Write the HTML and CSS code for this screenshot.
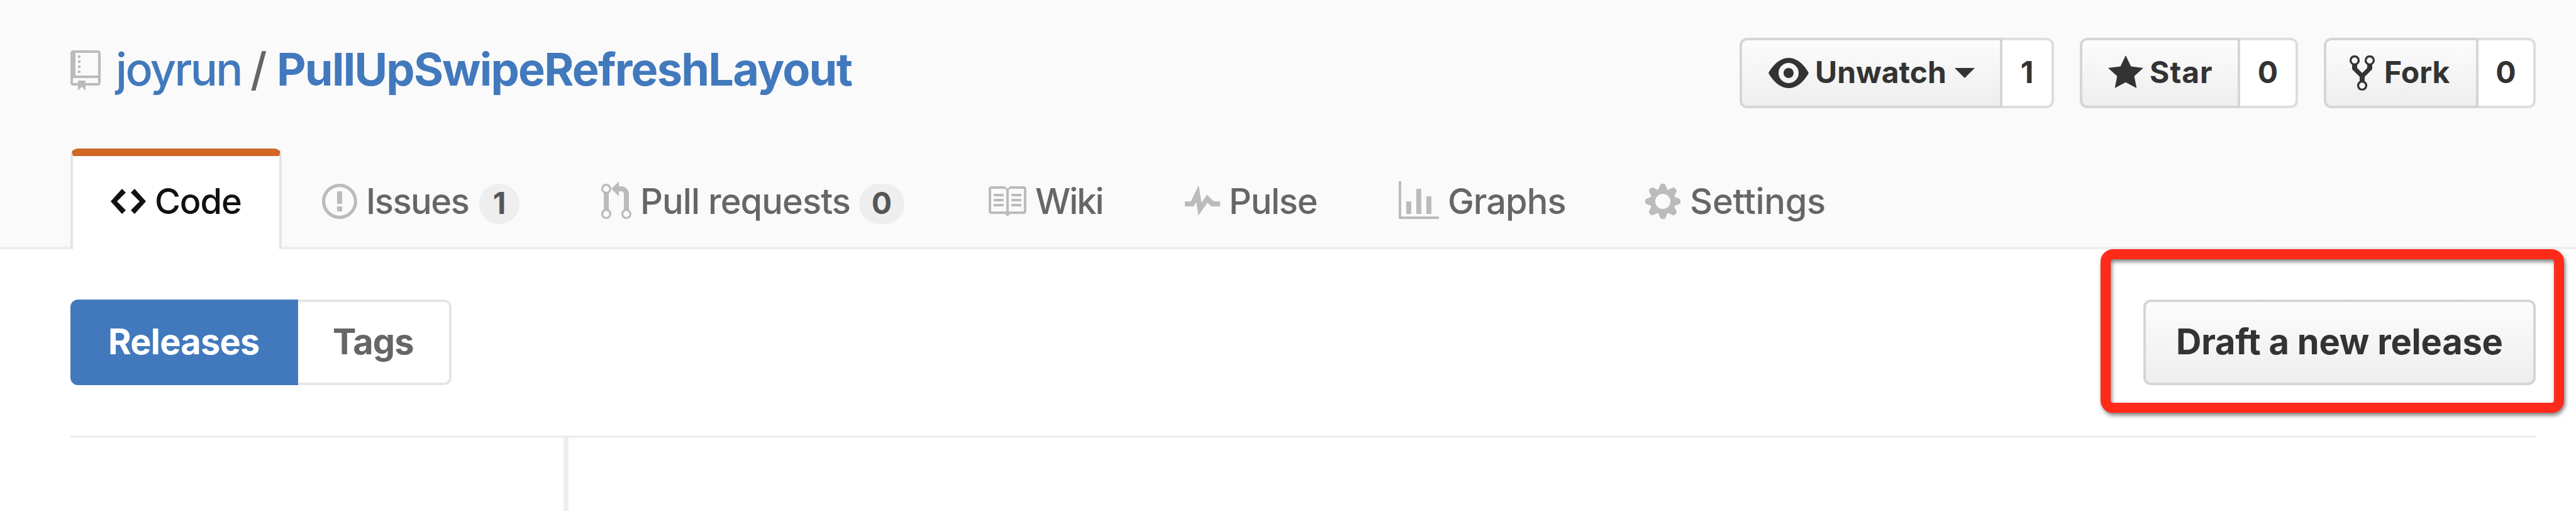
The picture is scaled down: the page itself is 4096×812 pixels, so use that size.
FILE: index.html
```html
<!DOCTYPE html>
<html lang="en">
<head>
<meta charset="utf-8">
<title>joyrun/PullUpSwipeRefreshLayout</title>
<link rel="stylesheet" href="styles.css">
</head>
<body>
<header class="repo-head">
  <div class="title-row">
    <h1 class="title">
      <svg class="icon muted" width="48" height="64" viewBox="0 0 12 16"><path d="M4 9H3V8h1v1zm0-3H3v1h1V6zm0-2H3v1h1V4zm0-2H3v1h1V2zm8-1v12c0 .55-.45 1-1 1H6v2l-1.5-1.5L3 16v-2H1c-.55 0-1-.45-1-1V1c0-.55.45-1 1-1h10c.55 0 1 .45 1 1zm-1 10H1v2h2v-1h3v1h5v-2zm0-10H2v9h9V1z"/></svg>
      <a class="owner">joyrun</a><span class="slash">/</span><a class="repo">PullUpSwipeRefreshLayout</a>
    </h1>
    <div class="actions">
      <div class="action watch">
        <button class="btn btn-sm"><svg class="icon" width="64" height="64" viewBox="0 0 16 16"><path d="M8.06 2C3 2 0 8 0 8s3 6 8.06 6C13 14 16 8 16 8s-3-6-7.94-6zM8 12c-2.2 0-4-1.78-4-4 0-2.2 1.8-4 4-4 2.22 0 4 1.8 4 4 0 2.22-1.78 4-4 4zm2-4c0 1.11-.89 2-2 2-1.11 0-2-.89-2-2 0-1.11.89-2 2-2 1.11 0 2 .89 2 2z"/></svg><span class="label">Unwatch</span><span class="caret"></span></button>
        <a class="count">1</a>
      </div>
      <div class="action star">
        <button class="btn btn-sm"><svg class="icon" width="56" height="64" viewBox="0 0 14 16"><path d="M14 6l-4.9-.64L7 1 4.9 5.36 0 6l3.6 3.26L2.67 14 7 11.67 11.33 14l-.93-4.74L14 6z"/></svg><span class="label">Star</span></button>
        <a class="count">0</a>
      </div>
      <div class="action fork">
        <button class="btn btn-sm"><svg class="icon" width="40" height="64" viewBox="0 0 10 16"><path d="M8 1a1.993 1.993 0 0 0-1 3.72V6L5 8 3 6V4.72A1.993 1.993 0 0 0 2 1a1.993 1.993 0 0 0-1 3.72V6.5l3 3v1.78A1.993 1.993 0 0 0 5 15a1.993 1.993 0 0 0 1-3.72V9.5l3-3V4.72A1.993 1.993 0 0 0 8 1zM2 4.2C1.34 4.2.8 3.65.8 3c0-.65.55-1.2 1.2-1.2.65 0 1.2.55 1.2 1.2 0 .65-.55 1.2-1.2 1.2zm3 10c-.66 0-1.2-.55-1.2-1.2 0-.65.55-1.2 1.2-1.2.65 0 1.2.55 1.2 1.2 0 .65-.55 1.2-1.2 1.2zm3-10c-.66 0-1.2-.55-1.2-1.2 0-.65.55-1.2 1.2-1.2.65 0 1.2.55 1.2 1.2 0 .65-.55 1.2-1.2 1.2z"/></svg><span class="label">Fork</span></button>
        <a class="count">0</a>
      </div>
    </div>
  </div>
  <nav class="tabs">
    <a class="tab tab-code selected"><svg class="icon" width="56" height="64" viewBox="0 0 14 16"><path d="M9.5 3L8 4.5 11.5 8 8 11.5 9.5 13 14 8 9.5 3zm-5 0L0 8l4.5 5L6 11.5 2.5 8 6 4.5 4.5 3z"/></svg><span class="label">Code</span></a>
    <a class="tab tab-issues"><svg class="icon" width="56" height="64" viewBox="0 0 14 16"><path d="M7 2.3c3.14 0 5.7 2.56 5.7 5.7s-2.56 5.7-5.7 5.7A5.71 5.71 0 0 1 1.3 8c0-3.14 2.56-5.7 5.7-5.7zM7 1C3.14 1 0 4.14 0 8s3.14 7 7 7 7-3.14 7-7-3.14-7-7-7zm1 3H6v5h2V4zm0 6H6v2h2v-2z"/></svg><span class="label">Issues</span><span class="counter">1</span></a>
    <a class="tab tab-pulls"><svg class="icon" width="48" height="64" viewBox="0 0 12 16"><path d="M11 11.28V5c-.03-.78-.34-1.47-.94-2.06C9.46 2.35 8.78 2.03 8 2H7V0L4 3l3 3V4h1c.27.02.48.11.69.31.21.2.3.42.31.69v6.28A1.993 1.993 0 0 0 10 15a1.993 1.993 0 0 0 1-3.72zm-1 2.92c-.66 0-1.2-.55-1.2-1.2 0-.65.55-1.2 1.2-1.2.65 0 1.2.55 1.2 1.2 0 .65-.55 1.2-1.2 1.2zM4 3c0-1.11-.89-2-2-2a1.993 1.993 0 0 0-1 3.72v6.56A1.993 1.993 0 0 0 2 15a1.993 1.993 0 0 0 1-3.72V4.72c.59-.34 1-.98 1-1.72zm-.8 10c0 .66-.55 1.2-1.2 1.2-.65 0-1.2-.55-1.2-1.2 0-.65.55-1.2 1.2-1.2.65 0 1.2.55 1.2 1.2zM2 4.2C1.34 4.2.8 3.65.8 3c0-.65.55-1.2 1.2-1.2.65 0 1.2.55 1.2 1.2 0 .65-.55 1.2-1.2 1.2z"/></svg><span class="label">Pull requests</span><span class="counter">0</span></a>
    <a class="tab tab-wiki"><svg class="icon" width="64" height="64" viewBox="0 0 16 16"><path d="M3 5h4v1H3V5zm0 3h4V7H3v1zm0 2h4V9H3v1zm11-5h-4v1h4V5zm0 2h-4v1h4V7zm0 2h-4v1h4V9zm2-6v9c0 .55-.45 1-1 1H9.5l-1 1-1-1H2c-.55 0-1-.45-1-1V3c0-.55.45-1 1-1h5.5l1 1 1-1H15c.55 0 1 .45 1 1zm-8 .5L7.5 3H2v9h6V3.5zm7-.5H9.5l-.5.5V12h6V3z"/></svg><span class="label">Wiki</span></a>
    <a class="tab tab-pulse"><svg class="icon" width="56" height="64" viewBox="0 0 14 16"><path d="M11.5 8L8.8 5.4 6.6 8.5 5.5 1.6 2.38 8H0v2h3.6l.9-1.8.9 5.4L9 8.5l1.6 1.5H14V8z"/></svg><span class="label">Pulse</span></a>
    <a class="tab tab-graphs"><svg class="icon" width="64" height="64" viewBox="0 0 16 16"><path d="M16 14v1H0V0h1v14h15zM5 13H3V8h2v5zm4 0H7V3h2v10zm4 0h-2V6h2v7z"/></svg><span class="label">Graphs</span></a>
    <a class="tab tab-settings"><svg class="icon" width="56" height="64" viewBox="-7 -8 14 16">
      <defs>
        <path id="tooth" d="M-2 -4.2L-1.1 -6.4Q-.9 -7 -.5 -7H.5Q.9 -7 1.1 -6.4L2 -4.2z"/>
        <path id="tooth-diagonal" d="M-2 -4.2L-1.2 -6.3Q-1 -7.1 -.4 -7.1H.4Q1 -7.1 1.2 -6.3L2 -4.2z"/>
      </defs>
      <circle class="gear-ring" r="4"/>
      <use href="#tooth"/><use href="#tooth" transform="rotate(90)"/><use href="#tooth" transform="rotate(180)"/><use href="#tooth" transform="rotate(270)"/>
      <use href="#tooth-diagonal" transform="rotate(45)"/><use href="#tooth-diagonal" transform="rotate(135)"/><use href="#tooth-diagonal" transform="rotate(225)"/><use href="#tooth-diagonal" transform="rotate(315)"/>
    </svg><span class="label">Settings</span></a>
  </nav>
</header>
<main class="content">
  <div class="subnav">
    <div class="switch"><a class="seg releases active">Releases</a><a class="seg tags">Tags</a></div>
    <div class="draft"><button class="btn btn-lg">Draft a new release</button><div class="highlight"></div></div>
  </div>
  <div class="timeline"><div class="timeline-side"></div></div>
</main>
</body>
</html>
```
FILE: styles.css
```css
* { box-sizing: border-box; }
body {
  margin: 0;
  height: 812px;
  overflow: hidden;
  background: #fff;
  color: #333;
  font-family: Inter, "Liberation Sans", sans-serif;
}
.icon { display: block; flex: none; fill: currentColor; }
.muted { color: #bbb; }
.gear-ring { fill: none; stroke: currentColor; stroke-width: 2; }

.repo-head {
  height: 396px;
  padding: 60px 64px 0 112px;
  background: #fafafa;
  border-bottom: 4px solid #eee;
}
.title-row { display: flex; justify-content: space-between; height: 176px; }
.title {
  display: flex;
  align-items: center;
  height: 100px;
  margin: 0;
  font-size: 72px;
  font-weight: 450;
  line-height: 100px;
}
.title .icon { margin-top: 4px; }
.owner, .repo { color: #4279bd; }
.owner { width: 215px; padding-left: 24px; letter-spacing: -2.7px; }
.slash { width: 65px; padding-left: 23px; color: #666; }
.repo { font-weight: 700; letter-spacing: -1.78px; }

.btn {
  display: flex;
  align-items: center;
  margin: 0;
  border: 4px solid #d5d5d5;
  border-radius: 12px;
  background: linear-gradient(#fcfcfc, #eee);
  color: #333;
  font-family: inherit;
  font-weight: 700;
}
.actions { display: flex; }
.action { display: flex; height: 112px; font-size: 48px; font-weight: 700; }
.btn-sm {
  height: 112px;
  padding: 0 0 0 42px;
  border-radius: 12px 0 0 12px;
  font-size: 48px;
}
.btn-sm .label { padding-bottom: 3px; }
.count {
  flex: 1;
  border: 4px solid #ddd;
  border-left: 0;
  border-radius: 0 12px 12px 0;
  background: #fff;
  line-height: 101px;
  text-align: center;
}
.watch { width: 500px; margin-right: 41px; }
.watch .btn { width: 418px; }
.watch .label { margin-left: 10px; }
.star { width: 347px; margin-right: 41px; }
.star .btn { width: 255px; padding-left: 41px; }
.star .label { margin-left: 10px; letter-spacing: 1px; }
.fork { width: 337px; }
.fork .btn { width: 246px; padding-left: 37px; }
.fork .label { margin-left: 15px; }
.caret {
  margin-left: 13px;
  border: 16px solid transparent;
  border-top-color: #333;
  border-bottom: 0;
}

.tabs { display: flex; height: 160px; }
.tab {
  display: flex;
  align-items: center;
  height: 160px;
  padding: 8px 66px 0 64px;
  color: #666;
  font-size: 56px;
  font-weight: 450;
  white-space: nowrap;
}
.tab .icon { color: #bbb; }
.tab .label { margin-left: 14px; line-height: 64px; }
.tab.selected {
  padding: 0 0 4px 60px;
  border: 4px solid #e5e5e5;
  border-top: 12px solid #d06924;
  border-bottom: 0;
  border-radius: 12px 12px 0 0;
  background: #fff;
  color: #111;
}
.tab.selected .icon { color: #111; }
.tab-code { width: 336px; letter-spacing: -1.2px; }
.tab-issues { width: 444px; letter-spacing: -1.5px; }
.tab-pulls { width: 612px; letter-spacing: -.95px; }
.tab-wiki { width: 316px; letter-spacing: -2px; }
.tab-pulse { width: 340px; letter-spacing: -1.3px; }
.tab-graphs { width: 392px; letter-spacing: -1px; }
.tab-settings { letter-spacing: -.3px; }
.tab.tab-settings .label { margin-left: 15px; }
.counter {
  min-width: 64px;
  margin: 8px 0 0 auto;
  padding: 0 20px 2px;
  border-radius: 40px;
  background: #eee;
  color: #555;
  font-size: 48px;
  font-weight: 700;
  letter-spacing: 0;
  line-height: 62px;
  text-align: center;
}

.content { padding: 80px 64px 0 112px; }
.subnav { display: flex; justify-content: space-between; height: 216px; }
.switch { display: flex; height: 136px; font-size: 56px; font-weight: 700; line-height: 127px; }
.seg { border: 4px solid #e5e5e5; color: #666; }
.releases {
  width: 362px;
  padding-left: 56px;
  border-color: #4279bd;
  border-radius: 12px 0 0 12px;
  background: #4279bd;
  color: #fff;
  letter-spacing: -.83px;
}
.tags {
  width: 244px;
  padding-left: 55px;
  border-left: 0;
  border-radius: 0 12px 12px 0;
  letter-spacing: -1px;
}
.draft { position: relative; height: 136px; }
.btn-lg {
  width: 624px;
  height: 136px;
  padding: 0 0 2px 48px;
  font-size: 56px;
  letter-spacing: -.23px;
  white-space: nowrap;
}
/* Callout frame laid over the button and its surroundings */
.highlight {
  position: absolute;
  top: -80px;
  left: -68px;
  width: 737px;
  height: 260px;
  border: 16px solid #ff2a1a;
  border-radius: 20px;
  filter: drop-shadow(2px 4px 3px rgba(0, 0, 0, .5));
}
.timeline { height: 120px; border-top: 4px solid #eee; }
.timeline-side { width: 792px; height: 116px; border-right: 8px solid #eee; }
```
